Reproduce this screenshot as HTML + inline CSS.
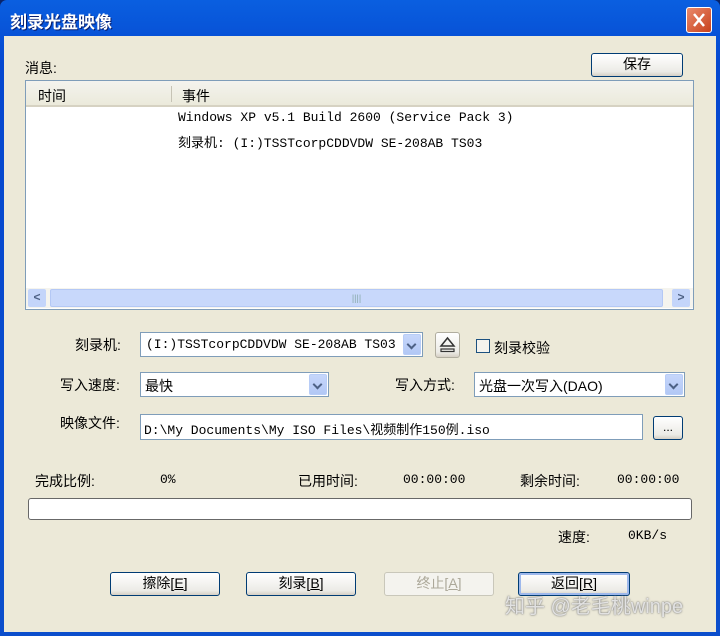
<!DOCTYPE html>
<html><head><meta charset="utf-8"><style>
*{margin:0;padding:0;box-sizing:border-box}
body{width:720px;height:636px;overflow:hidden;background:#0a246a;font-family:"Liberation Sans","WenQuanYi Zen Hei","Noto Sans CJK SC",sans-serif;font-size:14px;color:#000;position:relative}
.win{position:absolute;left:0;top:0;width:720px;height:636px;background:linear-gradient(#0a5fe0,#0548d0 10%,#0b4ecc);border-radius:7px 7px 0 0}
.client{position:absolute;left:4px;top:36px;width:712px;height:596px;background:#ece9d8}
.title{position:absolute;left:10px;top:8px;color:#fff;font-weight:bold;font-size:17px;text-shadow:1px 1px #0a1f6e}
.close{position:absolute;left:686px;top:7px;width:26px;height:26px;border:1px solid #fff;border-radius:3px;background:linear-gradient(135deg,#e98a6c,#c8411c);}
.a{position:absolute;white-space:nowrap}
.btn{position:absolute;border:1px solid #003c74;border-radius:3px;background:linear-gradient(#fff,#ecebe6 80%,#d6d0c5);text-align:center;font-size:14px}
.combo{position:absolute;background:#fff;border:1px solid #7f9db9}
.dd{position:absolute;right:1px;top:1px;bottom:1px;width:18px;border-radius:2px;background:linear-gradient(#c6d6fb,#b2c8f5);border:1px solid #b8cdf7}
.dd:after{content:"";position:absolute;left:4px;top:6px;width:5px;height:5px;border-right:2px solid #4d6185;border-bottom:2px solid #4d6185;transform:rotate(45deg)}
.mono{font-family:"Liberation Mono","WenQuanYi Zen Hei",monospace;font-size:13px}
</style></head><body>
<div class="win"></div>
<div class="title">刻录光盘映像</div>
<div class="close"><svg width="24" height="24"><path d="M7 6L17 18M17 6L7 18" stroke="#fff" stroke-width="2.5"/></svg></div>
<div class="client"></div>

<div class="a" style="left:25px;top:58px">消息:</div>
<div class="btn" style="left:591px;top:53px;width:92px;height:24px;line-height:21px">保存</div>

<div class="a" style="left:25px;top:80px;width:669px;height:230px;background:#fff;border:1px solid #7f9db9"></div>
<div class="a" style="left:26px;top:81px;width:667px;height:26px;background:linear-gradient(#f4f3ee,#ebeadb);border-bottom:2px solid #d6d2c2"></div>
<div class="a" style="left:38px;top:86px">时间</div>
<div class="a" style="left:171px;top:86px;width:1px;height:16px;background:#c6c3b5"></div>
<div class="a" style="left:182px;top:86px">事件</div>
<div class="a mono" style="left:178px;top:110px">Windows XP v5.1 Build 2600 (Service Pack 3)</div>
<div class="a mono" style="left:178px;top:132px">刻录机: (I:)TSSTcorpCDDVDW SE-208AB TS03</div>
<div class="a" style="left:26px;top:288px;width:667px;height:20px;background:#f5f4ee"></div>
<div class="a" style="left:28px;top:289px;width:18px;height:18px;background:#c4d5fa;border-radius:2px;font-size:12px;color:#4d6185;text-align:center;line-height:17px;font-weight:bold">&lt;</div>
<div class="a" style="left:50px;top:289px;width:613px;height:18px;background:#c8d8fb;border:1px solid #b4c8f5;border-radius:2px;text-align:center;font-size:9px;color:#8aa;line-height:16px">||||</div>
<div class="a" style="left:672px;top:289px;width:18px;height:18px;background:#c4d5fa;border-radius:2px;font-size:12px;color:#4d6185;text-align:center;line-height:17px;font-weight:bold">&gt;</div>

<div class="a" style="left:75px;top:335px">刻录机:</div>
<div class="combo" style="left:140px;top:332px;width:283px;height:25px"><span class="a mono" style="left:5px;top:4px">(I:)TSSTcorpCDDVDW SE-208AB TS03</span><div class="dd"></div></div>
<div class="btn" style="left:435px;top:332px;width:25px;height:26px;border-color:#b0ad9f"><svg width="23" height="24"><path d="M5 13L11.5 5L18 13Z" fill="none" stroke="#333" stroke-width="1.5"/><rect x="5" y="16" width="13" height="2.5" fill="none" stroke="#333" stroke-width="1.2"/></svg></div>
<div class="a" style="left:476px;top:339px;width:14px;height:14px;border:1px solid #1c5180;background:#f4f3ee"></div>
<div class="a" style="left:494px;top:338px">刻录校验</div>

<div class="a" style="left:60px;top:375px">写入速度:</div>
<div class="combo" style="left:140px;top:372px;width:189px;height:25px"><span class="a" style="left:4px;top:3px">最快</span><div class="dd"></div></div>
<div class="a" style="left:395px;top:375px">写入方式:</div>
<div class="combo" style="left:474px;top:372px;width:211px;height:25px"><span class="a" style="left:4px;top:3px">光盘一次写入(DAO)</span><div class="dd"></div></div>

<div class="a" style="left:60px;top:413px">映像文件:</div>
<div class="combo" style="left:140px;top:414px;width:503px;height:26px"><span class="a mono" style="left:3px;top:4px">D:\My Documents\My ISO Files\视频制作150例.iso</span></div>
<div class="btn" style="left:653px;top:416px;width:30px;height:24px;line-height:20px;font-size:12px">...</div>

<div class="a" style="left:35px;top:471px">完成比例:</div>
<div class="a mono" style="left:160px;top:472px">0%</div>
<div class="a" style="left:298px;top:471px">已用时间:</div>
<div class="a mono" style="left:403px;top:472px">00:00:00</div>
<div class="a" style="left:520px;top:471px">剩余时间:</div>
<div class="a mono" style="left:617px;top:472px">00:00:00</div>
<div class="a" style="left:28px;top:498px;width:664px;height:22px;background:#fff;border:1px solid #686868;border-radius:3px"></div>
<div class="a" style="left:558px;top:527px">速度:</div>
<div class="a mono" style="left:628px;top:528px">0KB/s</div>

<div class="btn" style="left:110px;top:572px;width:110px;height:24px;line-height:21px">擦除[<u>E</u>]</div>
<div class="btn" style="left:246px;top:572px;width:110px;height:24px;line-height:21px">刻录[<u>B</u>]</div>
<div class="btn" style="left:384px;top:572px;width:110px;height:24px;line-height:21px;border-color:#c9c7ba;background:#f4f3ee;color:#aca899">终止[<u>A</u>]</div>
<div class="btn" style="left:518px;top:572px;width:112px;height:24px;line-height:21px;box-shadow:inset 0 0 0 2px #9db8ec">返回[<u>R</u>]</div>
<div class="a" style="left:505px;top:590px;font-size:20px;color:rgba(235,235,235,.9);text-shadow:0 0 2px #777,0 0 1px #999">知乎 @老毛桃winpe</div>
</body></html>
